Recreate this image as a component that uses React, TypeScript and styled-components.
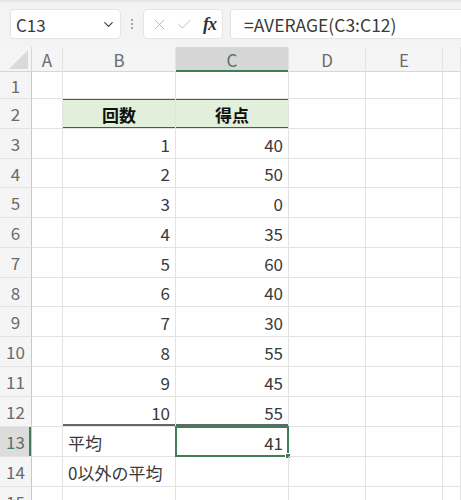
import React from 'react';
import styled, { createGlobalStyle } from 'styled-components';
import { ChevronDown, X, Check } from 'lucide-react';

const GlobalStyle = createGlobalStyle`
  html, body {
    margin: 0;
    padding: 0;
    background: #f3f3f3;
    overflow: hidden;
  }
  * {
    box-sizing: border-box;
  }
`;

const FONT = `"Noto Sans CJK JP", "Noto Sans", sans-serif`;

const Page = styled.div`
  width: 461px;
  height: 500px;
  overflow: hidden;
  font-family: ${FONT};
  background: #f3f3f3;
  border-top: 2px solid #e6e6e6;
`;

const Toolbar = styled.div`
  display: flex;
  align-items: center;
  height: 45px;
  padding: 6px 0 7px 10px;
`;

const NameBox = styled.div`
  display: flex;
  align-items: center;
  justify-content: space-between;
  width: 111px;
  height: 30px;
  padding: 0 4px 0 5px;
  background: #fff;
  border: 1px solid #e4e4e4;
  border-radius: 4px;
  font-size: 17px;
  color: #3a3a3a;
`;

const Grip = styled.div`
  display: flex;
  flex-direction: column;
  gap: 2px;
  margin: 0 10px;
  span {
    width: 2px;
    height: 2px;
    border-radius: 50%;
    background: #8a8a8a;
  }
`;

const FxGroup = styled.div`
  display: flex;
  align-items: center;
  gap: 8px;
  width: 80px;
  height: 30px;
  padding: 0 6px 0 7px;
  background: #fff;
  border: 1px solid #e4e4e4;
  border-radius: 4px;
  color: #b5b5b5;
`;

const FxLabel = styled.span`
  margin-left: auto;
  font-family: "Liberation Serif", serif;
  font-style: italic;
  font-weight: bold;
  font-size: 18px;
  color: #333;
  letter-spacing: -1px;
`;

const FormulaBox = styled.div`
  flex: 1;
  display: flex;
  align-items: center;
  height: 30px;
  margin-left: 7px;
  padding-left: 13px;
  background: #fff;
  border: 1px solid #e4e4e4;
  border-right: none;
  border-radius: 4px 0 0 4px;
  font-size: 17.5px;
  color: #3a3a3a;
`;

const COLS = '32px 31px 113px 113px 77px 77px 1fr';

const SheetRow = styled.div<{ $h: number }>`
  display: grid;
  grid-template-columns: ${COLS};
  height: ${({ $h }) => $h}px;
  background: #fff;
`;

const HeaderRow = styled.div`
  display: grid;
  grid-template-columns: ${COLS};
  height: 25px;
  background: #f5f5f5;
  border-bottom: 1px solid #d6d6d6;
`;

const Corner = styled.div`
  display: flex;
  align-items: flex-end;
  justify-content: flex-end;
  padding: 0 3px 3px 0;
  border-right: 1px solid #d6d6d6;
`;

const ColHead = styled.div<{ $active?: boolean }>`
  display: flex;
  align-items: center;
  justify-content: center;
  font-size: 17px;
  color: ${({ $active }) => ($active ? '#587263' : '#6b6b6b')};
  background: ${({ $active }) => ($active ? '#d6d6d6' : 'transparent')};
  border-right: 1px solid #e3e3e3;
  box-shadow: ${({ $active }) => ($active ? 'inset 0 -2px 0 #3f7d5b' : 'none')};
`;

const RowHead = styled.div<{ $active?: boolean }>`
  display: flex;
  align-items: center;
  justify-content: center;
  font-size: 17px;
  color: ${({ $active }) => ($active ? '#587263' : '#6b6b6b')};
  background: ${({ $active }) => ($active ? '#dcdcdc' : '#f5f5f5')};
  border-right: 1px solid #c8c8c8;
  border-bottom: 1px solid #e3e3e3;
  box-shadow: ${({ $active }) => ($active ? 'inset -2px 0 0 #3f7d5b' : 'none')};
`;

const Cell = styled.div<{
  $align?: 'left' | 'right' | 'center';
  $fill?: string;
  $bold?: boolean;
  $rule?: 'band' | 'bottom';
}>`
  position: relative;
  display: flex;
  align-items: center;
  justify-content: ${({ $align }) =>
    $align === 'right' ? 'flex-end' : $align === 'center' ? 'center' : 'flex-start'};
  padding: 1px 5px 0 5px;
  font-size: 17px;
  font-weight: ${({ $bold }) => ($bold ? 700 : 400)};
  color: ${({ $bold }) => ($bold ? '#111' : '#3a3a3a')};
  white-space: nowrap;
  background: ${({ $fill }) => $fill || 'transparent'};
  border-right: 1px solid #e3e3e3;
  border-bottom: 1px solid #e3e3e3;
  box-shadow: ${({ $rule }) =>
    $rule === 'band'
      ? 'inset 0 1px 0 #555, inset 0 -1px 0 #555'
      : $rule === 'bottom'
      ? 'inset 0 -2px 0 #666'
      : 'none'};
`;

const Selection = styled.div`
  position: absolute;
  top: -1px;
  left: -1px;
  right: -1px;
  bottom: -1px;
  border: 2px solid #3f7d5b;
  pointer-events: none;
`;

const FillHandle = styled.div`
  position: absolute;
  right: -4px;
  bottom: -4px;
  width: 6px;
  height: 6px;
  background: #3f7d5b;
  border: 1px solid #fff;
`;

type RowData = {
  n: number;
  h: number;
  b?: string;
  c?: string;
  kind?: 'head' | 'last' | 'avg' | 'label';
};

const rows: RowData[] = [
  { n: 1, h: 27 },
  { n: 2, h: 30, b: '回数', c: '得点', kind: 'head' },
  { n: 3, h: 30, b: '1', c: '40' },
  { n: 4, h: 29, b: '2', c: '50' },
  { n: 5, h: 30, b: '3', c: '0' },
  { n: 6, h: 30, b: '4', c: '35' },
  { n: 7, h: 30, b: '5', c: '60' },
  { n: 8, h: 29, b: '6', c: '40' },
  { n: 9, h: 30, b: '7', c: '30' },
  { n: 10, h: 30, b: '8', c: '55' },
  { n: 11, h: 30, b: '9', c: '45' },
  { n: 12, h: 30, b: '10', c: '55', kind: 'last' },
  { n: 13, h: 30, b: '平均', c: '41', kind: 'avg' },
  { n: 14, h: 30, b: '0以外の平均', kind: 'label' },
  { n: 15, h: 30 },
];

const CornerMark = () => (
  <svg width="19" height="19" viewBox="0 0 19 19">
    <polygon points="19,0 19,19 0,19" fill="#dadada" />
  </svg>
);

const DataRow = ({ row }: { row: RowData }) => {
  const head = row.kind === 'head';
  const textAlign = head ? 'center' : row.kind === 'avg' || row.kind === 'label' ? 'left' : 'right';
  const fill = head ? '#e2efda' : undefined;
  const rule = head ? 'band' : row.kind === 'last' ? 'bottom' : undefined;
  return (
    <SheetRow $h={row.h}>
      <RowHead $active={row.kind === 'avg'}>{row.n}</RowHead>
      <Cell />
      <Cell $align={textAlign} $fill={fill} $bold={head} $rule={rule}>
        {row.b}
      </Cell>
      <Cell $align={head ? 'center' : 'right'} $fill={fill} $bold={head} $rule={rule}>
        {row.c}
        {row.kind === 'avg' && (
          <Selection>
            <FillHandle />
          </Selection>
        )}
      </Cell>
      <Cell />
      <Cell />
      <Cell />
    </SheetRow>
  );
};

export default function App() {
  return (
    <Page>
      <GlobalStyle />
      <Toolbar>
        <NameBox>
          C13
          <ChevronDown size={15} strokeWidth={2} color="#444" />
        </NameBox>
        <Grip>
          <span />
          <span />
          <span />
        </Grip>
        <FxGroup>
          <X size={17} strokeWidth={1.3} />
          <Check size={17} strokeWidth={1.3} />
          <FxLabel>fx</FxLabel>
        </FxGroup>
        <FormulaBox>=AVERAGE(C3:C12)</FormulaBox>
      </Toolbar>
      <HeaderRow>
        <Corner>
          <CornerMark />
        </Corner>
        <ColHead>A</ColHead>
        <ColHead>B</ColHead>
        <ColHead $active>C</ColHead>
        <ColHead>D</ColHead>
        <ColHead>E</ColHead>
        <ColHead />
      </HeaderRow>
      {rows.map((row) => (
        <DataRow key={row.n} row={row} />
      ))}
    </Page>
  );
}
